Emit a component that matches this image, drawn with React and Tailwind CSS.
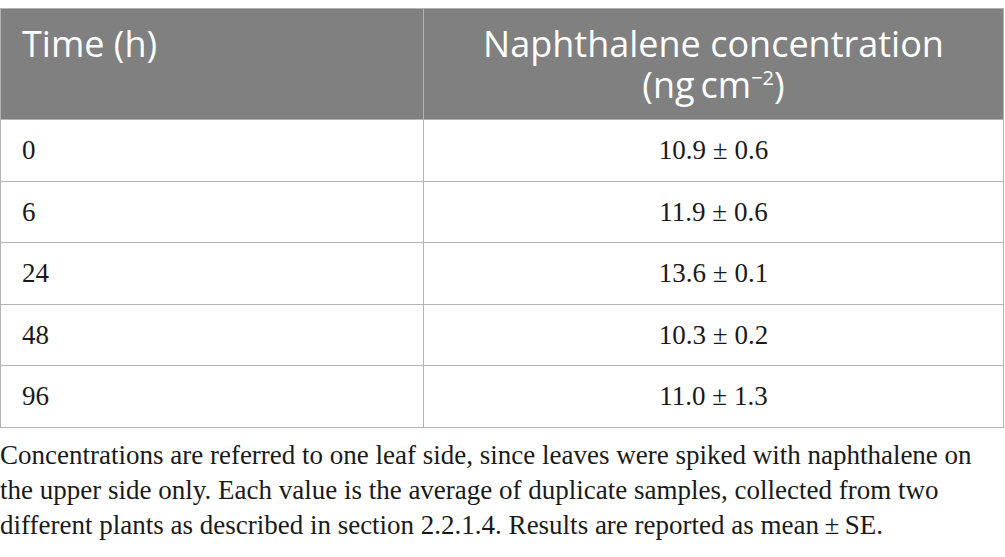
const rows = [
  ["0", "10.9 ± 0.6"],
  ["6", "11.9 ± 0.6"],
  ["24", "13.6 ± 0.1"],
  ["48", "10.3 ± 0.2"],
  ["96", "11.0 ± 1.3"],
];

export default function App() {
  return (
    <div className="min-h-screen bg-white pt-[8px]">
      <table className="w-[1004px] border-collapse">
        <thead>
          <tr className="bg-[#7f807f] text-white font-['Open_Sans',sans-serif] text-[36px] leading-[41px]">
            <th className="h-[111px] w-[423px] border-[1.5px] border-[#b3b3b3] px-[21px] pt-[14px] text-left align-top font-normal">
              Time (h)
            </th>
            <th className="border-[1.5px] border-[#b3b3b3] px-4 pt-[14px] text-center align-top font-normal">
              <div>Naphthalene concentration</div>
              <div>
                (ng&thinsp;cm<span className="align-super text-[20px] leading-none">−2</span>)
              </div>
            </th>
          </tr>
        </thead>
        <tbody className="font-['Liberation_Serif',serif] text-[27px] text-[#1a1a1a]">
          {rows.map(([time, value]) => (
            <tr key={time} className="h-[61.5px]">
              <td className="border-[1.5px] border-[#b3b3b3] px-[21px] align-middle">
                {time}
              </td>
              <td className="border-[1.5px] border-[#b3b3b3] text-center align-middle">
                {value}
              </td>
            </tr>
          ))}
        </tbody>
      </table>
      <p className="mt-[10px] w-[1004px] font-['Liberation_Serif',serif] text-[27px] leading-[35px] text-[#1a1a1a]">
        Concentrations are referred to one leaf side, since leaves were spiked with naphthalene on
        <br />
        the upper side only. Each value is the average of duplicate samples, collected from two
        <br />
        different plants as described in section 2.2.1.4. Results are reported as mean&thinsp;±&thinsp;SE.
      </p>
    </div>
  );
}
